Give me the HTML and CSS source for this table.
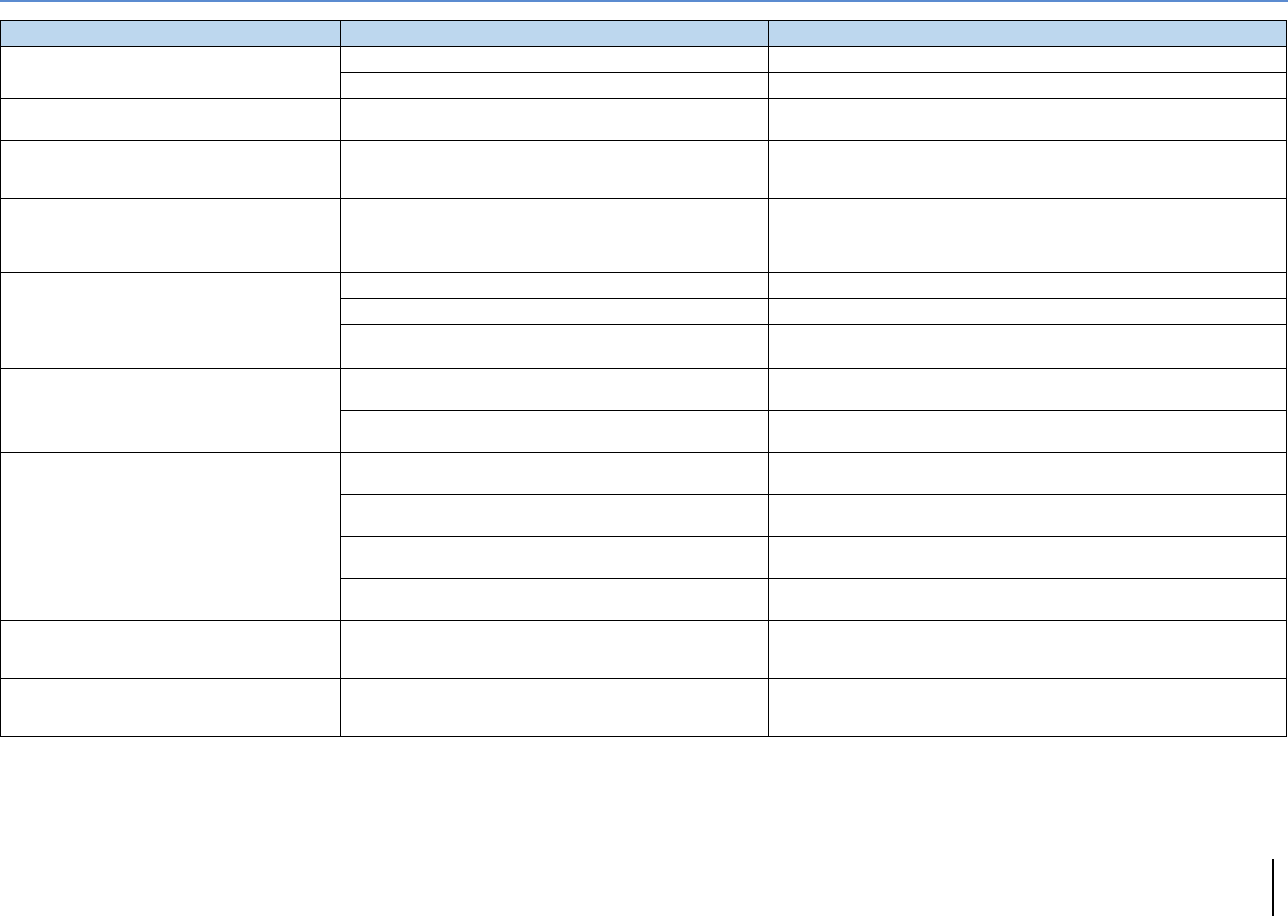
FILE: index.html
```html
<!DOCTYPE html>
<html lang="en">
<head>
<meta charset="utf-8">
<title>Table</title>
<link rel="stylesheet" href="styles.css">
</head>
<body>
<div class="topline"></div>
<table class="grid">
  <thead>
    <tr class="h26">
      <th class="c1"></th>
      <th class="c2"></th>
      <th class="c3"></th>
    </tr>
  </thead>
  <tbody>
    <tr class="h26"><td rowspan="2"></td><td></td><td></td></tr>
    <tr class="h26"><td></td><td></td></tr>

    <tr class="h42"><td></td><td></td><td></td></tr>

    <tr class="h58"><td></td><td></td><td></td></tr>

    <tr class="h74"><td></td><td></td><td></td></tr>

    <tr class="h26"><td rowspan="3"></td><td></td><td></td></tr>
    <tr class="h26"><td></td><td></td></tr>
    <tr class="h44"><td></td><td></td></tr>

    <tr class="h42"><td rowspan="2"></td><td></td><td></td></tr>
    <tr class="h42"><td></td><td></td></tr>

    <tr class="h42"><td rowspan="4"></td><td></td><td></td></tr>
    <tr class="h42"><td></td><td></td></tr>
    <tr class="h42"><td></td><td></td></tr>
    <tr class="h42"><td></td><td></td></tr>

    <tr class="h58"><td></td><td></td><td></td></tr>

    <tr class="h58"><td></td><td></td><td></td></tr>
  </tbody>
</table>
<div class="footer">
  <div class="pagebar"></div>
</div>
</body>
</html>
```
FILE: styles.css
```css
html, body {
  margin: 0;
  padding: 0;
  background: #ffffff;
  font-family: "Liberation Sans", Arial, sans-serif;
}

.topline {
  height: 2px;
  width: 1288px;
  background: #5b8bd0;
  margin-bottom: 18px;
}

.grid {
  border-collapse: separate;
  border-spacing: 0;
  table-layout: fixed;
  width: 1287px;
  border-left: 1px solid #000;
  border-top: 1px solid #000;
}

.grid th,
.grid td {
  box-sizing: border-box;
  padding: 0;
  border-right: 1px solid #000;
  border-bottom: 1px solid #000;
}

.grid th {
  background: #bdd7ee;
}

.c1 { width: 340px; }
.c2 { width: 428px; }
.c3 { width: 518px; }

.h26 { height: 26px; }
.h42 { height: 42px; }
.h44 { height: 44px; }
.h58 { height: 58px; }
.h74 { height: 74px; }

.footer {
  display: flex;
  justify-content: flex-end;
  padding-right: 14px;
  margin-top: 122px;
}

.pagebar {
  width: 2px;
  height: 57px;
  background: #000;
}
```
